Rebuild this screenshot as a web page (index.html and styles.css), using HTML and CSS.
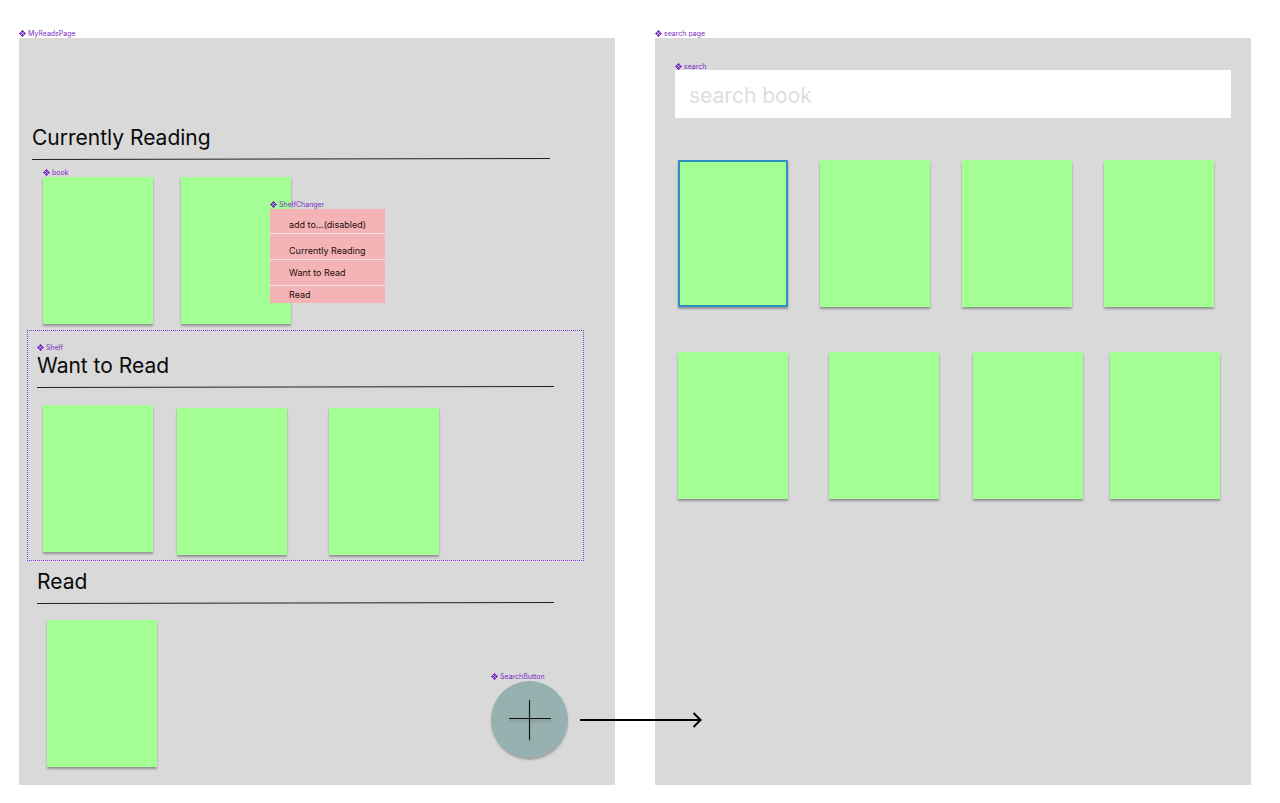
FILE: index.html
```html
<!DOCTYPE html>
<html lang="en">
<head>
<meta charset="utf-8">
<meta name="viewport" content="width=device-width, initial-scale=1">
<title>MyReads wireframe</title>
<link rel="stylesheet" href="styles.css">
</head>
<body>
<svg class="defs" aria-hidden="true">
  <symbol id="component" viewBox="0 0 14 14">
    <path d="M7 0l3.200 3.200L7 6.400 3.800 3.200zM7 7.600l3.200 3.200L7 14l-3.200-3.200zM3.200 3.800L6.400 7l-3.200 3.200L0 7zM10.800 3.800L14 7l-3.200 3.200L7.600 7z"/>
  </symbol>
  <symbol id="rule" viewBox="0 0 518 2" preserveAspectRatio="none">
    <path d="M0 1.5L518 .5" fill="none" stroke="#222" stroke-width="1"/>
  </symbol>
</svg>
<main class="canvas">
  <section class="artboard">
    <p class="tag"><svg class="tag-icon"><use href="#component"/></svg>MyReadsPage</p>
    <div class="frame reads">
      <section class="shelf shelf-current">
        <h2 class="shelf-title">Currently Reading</h2>
        <svg class="rule"><use href="#rule"/></svg>
        <p class="tag tag-book"><svg class="tag-icon"><use href="#component"/></svg>book</p>
        <div class="books">
          <div class="book"></div>
          <div class="book book-open">
            <div class="changer">
              <p class="tag"><svg class="tag-icon"><use href="#component"/></svg>ShelfChanger</p>
              <div class="menu">
                <button class="menu-item menu-head" type="button" disabled>add to...(disabled)</button>
                <button class="menu-item menu-first" type="button">Currently Reading</button>
                <button class="menu-item" type="button">Want to Read</button>
                <button class="menu-item menu-last" type="button">Read</button>
              </div>
            </div>
          </div>
        </div>
      </section>
      <section class="shelf shelf-want">
        <p class="tag"><svg class="tag-icon"><use href="#component"/></svg>Shelf</p>
        <h2 class="shelf-title">Want to Read</h2>
        <svg class="rule"><use href="#rule"/></svg>
        <div class="books">
          <div class="book"></div>
          <div class="books-pair">
            <div class="book"></div>
            <div class="book"></div>
          </div>
        </div>
      </section>
      <section class="shelf shelf-read">
        <h2 class="shelf-title">Read</h2>
        <svg class="rule"><use href="#rule"/></svg>
        <div class="books">
          <div class="book"></div>
        </div>
      </section>
      <div class="add">
        <p class="tag"><svg class="tag-icon"><use href="#component"/></svg>SearchButton</p>
        <button class="add-button" type="button" aria-label="Search for a book">
          <svg class="plus" viewBox="0 0 42 42"><path d="M0 19.5h42M20.5 1v40" fill="none" stroke="#111" stroke-width="1"/></svg>
        </button>
      </div>
      <svg class="arrow" viewBox="0 0 122 16" aria-hidden="true"><path d="M0 8h120M113.500 1l7 7-7 7" fill="none" stroke="#000" stroke-width="2"/></svg>
    </div>
  </section>
  <section class="artboard">
    <p class="tag"><svg class="tag-icon"><use href="#component"/></svg>search page</p>
    <div class="frame finder">
      <label class="tag" for="search"><svg class="tag-icon"><use href="#component"/></svg>search</label>
      <input class="search" id="search" type="text" placeholder="search book">
      <div class="results results-top">
        <div class="book book-selected"></div>
        <div class="book"></div>
        <div class="book"></div>
        <div class="book"></div>
      </div>
      <div class="results results-bottom">
        <div class="book"></div>
        <div class="book"></div>
        <div class="book"></div>
        <div class="book"></div>
      </div>
    </div>
  </section>
</main>
</body>
</html>
```
FILE: styles.css
```css
* {
  box-sizing: border-box;
}

body {
  margin: 0;
  background: #fff;
  color: #0a0a0a;
  font-family: Inter, "Liberation Sans", sans-serif;
}

p,
h2 {
  margin: 0;
}

button,
input {
  border: 0;
  border-radius: 0;
  font-family: inherit;
}

.defs {
  position: absolute;
  width: 0;
  height: 0;
}

.canvas {
  display: grid;
  grid-template-columns: 1fr 1fr;
  gap: 40px;
  padding: 28px 29px 18px 19px;
}

.artboard {
  display: flex;
  flex-direction: column;
}

.frame {
  position: relative;
  flex: 1;
  background: #d9d9d9;
}

.tag {
  display: flex;
  align-items: center;
  gap: 2px;
  height: 10px;
  color: #7a2bc4;
  font-size: 7px;
  line-height: 11px;
}

.tag-icon {
  width: 7px;
  height: 7px;
  fill: #7020c0;
}

.shelf-title {
  font-size: 21px;
  font-weight: 400;
  line-height: 27px;
}

.rule {
  display: block;
  width: 100%;
  height: 2px;
  margin-top: 7px;
}

.books {
  display: flex;
}

.book {
  flex: none;
  width: 110px;
  height: 147px;
  background: #a3ff94;
  box-shadow: 0 2px 2px rgba(0, 0, 0, 0.32);
}

.reads {
  padding: 86px 31px 18px 8px;
}

.shelf-current {
  padding: 0 34px 6px 5px;
}

.shelf-current .books {
  gap: 28px;
  padding-left: 11px;
}

.tag-book {
  margin: 7px 0 0 11px;
}

.book-open {
  position: relative;
}

.changer {
  position: absolute;
  top: 22px;
  left: 89px;
  width: 115px;
}

.menu {
  display: flex;
  flex-direction: column;
  background: #f4b4b6;
}

.menu-item {
  height: 26px;
  padding: 0 0 0 19px;
  border-bottom: 1px solid #f8e2e3;
  background: none;
  color: #1c0c0d;
  font-size: 9px;
  line-height: 12px;
  text-align: left;
}

.menu-head {
  height: 25px;
  padding-top: 7px;
}

.menu-first {
  padding-top: 8px;
}

.menu-last {
  height: 17px;
  border-bottom: 0;
}

.shelf-want {
  padding: 11px 29px 5px 9px;
  border: 1px dotted #8a38e0;
}

.shelf-want .books {
  gap: 24px;
  padding: 17px 0 0 6px;
}

.books-pair {
  display: flex;
  gap: 42px;
  padding-top: 3px;
}

.shelf-read {
  padding: 7px 30px 0 10px;
}

.shelf-read .books {
  padding: 16px 0 0 10px;
}

.add {
  position: absolute;
  right: 47px;
  bottom: 27px;
}

.add-button {
  display: flex;
  align-items: center;
  justify-content: center;
  width: 77px;
  height: 77px;
  padding: 0;
  border-radius: 50%;
  background: #97b1b0;
  box-shadow: 0 2px 2px rgba(0, 0, 0, 0.25);
}

.plus {
  width: 42px;
  height: 42px;
  filter: drop-shadow(0 2px 1px rgba(0, 0, 0, 0.25));
}

.arrow {
  position: absolute;
  z-index: 1;
  right: -87px;
  bottom: 57px;
  width: 122px;
  height: 16px;
}

.finder {
  padding: 23px 20px 20px;
}

.search {
  display: block;
  width: 100%;
  height: 48px;
  margin-top: -1px;
  padding: 3px 14px 0;
  background: #fff;
  color: #111;
  font-size: 21px;
}

.search::placeholder {
  color: #dedede;
  opacity: 1;
}

.results {
  display: flex;
  padding-left: 3px;
}

.results-top {
  gap: 32px;
  margin-top: 42px;
}

.results-bottom {
  gap: 34px;
  margin-top: 45px;
}

.results-bottom .book:nth-child(2) {
  margin-left: 7px;
}

.results-bottom .book:nth-child(4) {
  margin-left: -7px;
}

.book-selected {
  border: 2px solid #2f8fc0;
}
```
